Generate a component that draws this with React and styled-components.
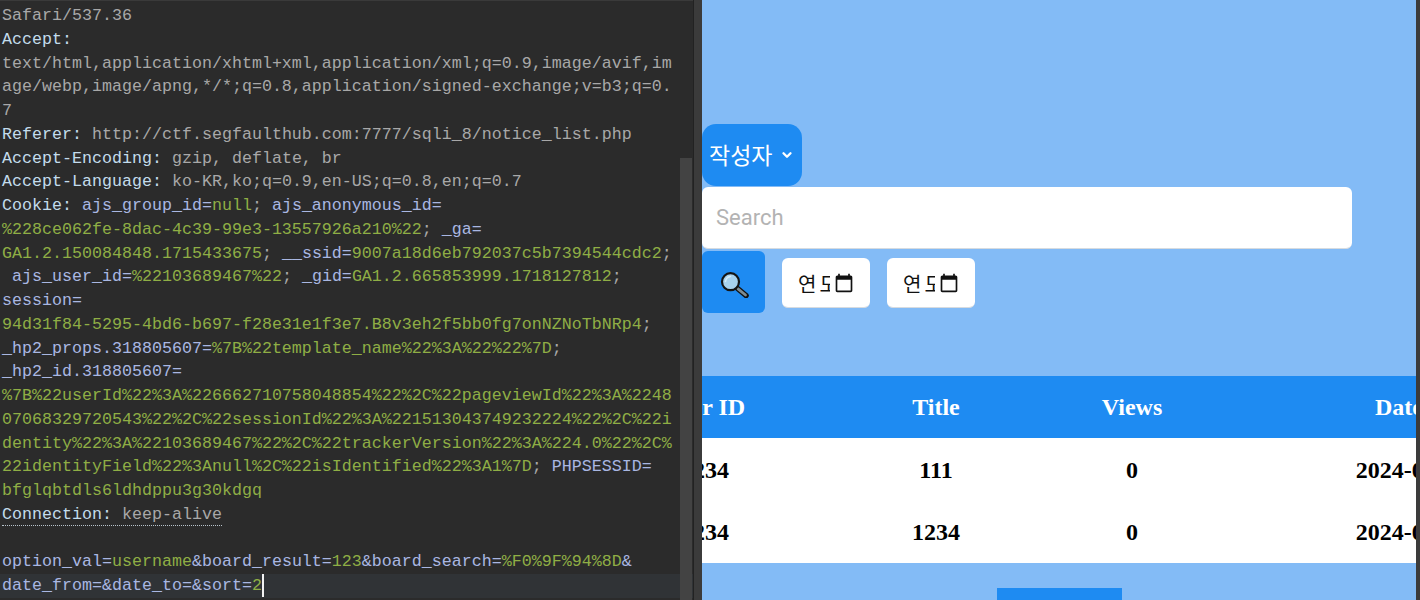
import React from "react";
import styled, { createGlobalStyle } from "styled-components";
import { ChevronDown } from "lucide-react";

const GlobalStyle = createGlobalStyle`
html, body {
  margin: 0;
  padding: 0;
  height: 100%;
  overflow: hidden;
  background: #2b2b2b;
}
`;

const tokenColors = {
  header: "#c3dcec",
  text: "#a8a8a8",
  name: "#a9b7e2",
  value: "#8fae45",
};

// h = header name, t = plain value, n = param name, v = param value
const requestLines = [
  [["t", "Safari/537.36"]],
  [["h", "Accept:"]],
  [["t", "text/html,application/xhtml+xml,application/xml;q=0.9,image/avif,im"]],
  [["t", "age/webp,image/apng,*/*;q=0.8,application/signed-exchange;v=b3;q=0."]],
  [["t", "7"]],
  [["h", "Referer:"], ["t", " http://ctf.segfaulthub.com:7777/sqli_8/notice_list.php"]],
  [["h", "Accept-Encoding:"], ["t", " gzip, deflate, br"]],
  [["h", "Accept-Language:"], ["t", " ko-KR,ko;q=0.9,en-US;q=0.8,en;q=0.7"]],
  [["h", "Cookie:"], ["n", " ajs_group_id="], ["v", "null"], ["t", "; "], ["n", "ajs_anonymous_id="]],
  [["v", "%228ce062fe-8dac-4c39-99e3-13557926a210%22"], ["t", "; "], ["n", "_ga="]],
  [["v", "GA1.2.150084848.1715433675"], ["t", "; "], ["n", "__ssid="], ["v", "9007a18d6eb792037c5b7394544cdc2"], ["t", ";"]],
  [["n", " ajs_user_id="], ["v", "%22103689467%22"], ["t", "; "], ["n", "_gid="], ["v", "GA1.2.665853999.1718127812"], ["t", ";"]],
  [["n", "session="]],
  [["v", "94d31f84-5295-4bd6-b697-f28e31e1f3e7.B8v3eh2f5bb0fg7onNZNoTbNRp4"], ["t", ";"]],
  [["n", "_hp2_props.318805607="], ["v", "%7B%22template_name%22%3A%22%22%7D"], ["t", ";"]],
  [["n", "_hp2_id.318805607="]],
  [["v", "%7B%22userId%22%3A%226662710758048854%22%2C%22pageviewId%22%3A%2248"]],
  [["v", "07068329720543%22%2C%22sessionId%22%3A%221513043749232224%22%2C%22i"]],
  [["v", "dentity%22%3A%22103689467%22%2C%22trackerVersion%22%3A%224.0%22%2C%"]],
  [["v", "22identityField%22%3Anull%2C%22isIdentified%22%3A1%7D"], ["t", "; "], ["n", "PHPSESSID="]],
  [["v", "bfglqbtdls6ldhdppu3g30kdgq"]],
];

const kinds = { h: "header", t: "text", n: "name", v: "value" };

const rows = [
  { id: "1234", title: "111", views: "0", date: "2024-06-11" },
  { id: "1234", title: "1234", views: "0", date: "2024-06-11" },
];

const Page = styled.div`
  display: flex;
  width: 1420px;
  height: 600px;
  overflow: hidden;
`;

const Editor = styled.div`
  position: relative;
  flex: 0 0 693px;
  box-sizing: border-box;
  padding-top: 3px;
  background: #2b2b2b;
  border-top: 1px solid #3a3a3a;
  font-family: "Liberation Mono", monospace;
  font-size: 16.67px;
  line-height: 23.75px;
  overflow: hidden;
`;

const Line = styled.div`
  height: 23.75px;
  padding-left: 2px;
  white-space: pre;
  color: ${tokenColors.text};
  background: ${(p) => (p.$current ? "#303336" : "transparent")};
`;

const Token = styled.span`
  color: ${(p) => tokenColors[p.$kind]};
`;

const Dotted = styled.span`
  border-bottom: 1px dotted #b8c4cc;
  padding-bottom: 1px;
`;

const Caret = styled.span`
  display: inline-block;
  width: 2px;
  height: 23px;
  vertical-align: top;
  background: #f2f2f2;
`;

const ScrollThumb = styled.div`
  position: absolute;
  top: 157px;
  right: 1px;
  bottom: 0;
  width: 12px;
  background: #434343;
`;

const Divider = styled.div`
  flex: 0 0 9px;
  box-sizing: border-box;
  background: #3b3b3b;
  border-left: 1px solid #222222;
`;

const Browser = styled.div`
  flex: 0 0 714px;
  box-sizing: border-box;
  padding-top: 124px;
  background: #83bbf6;
  overflow: hidden;
  font-family: "Noto Sans CJK KR", sans-serif;
`;

const Dropdown = styled.div`
  display: flex;
  align-items: center;
  gap: 8px;
  box-sizing: border-box;
  width: 100px;
  height: 62px;
  padding: 0 0 3px 7px;
  border-radius: 14px;
  background: #1e8bf2;
  color: #ffffff;
  font-size: 23px;
  svg {
    margin-top: 3px;
  }
`;

const SearchInput = styled.div`
  display: flex;
  align-items: center;
  box-sizing: border-box;
  width: 650px;
  height: 62px;
  margin-top: 1px;
  padding-left: 14px;
  border-radius: 6px;
  border-bottom: 1px solid #d6dbe0;
  background: #ffffff;
  color: #b3b3b3;
  font-family: Roboto, sans-serif;
  font-size: 22px;
`;

const Filters = styled.div`
  display: flex;
  align-items: center;
  gap: 17px;
  margin-top: 2px;
`;

const SearchButton = styled.div`
  display: flex;
  align-items: center;
  justify-content: center;
  width: 63px;
  height: 62px;
  border-radius: 6px;
  background: #1e8bf2;
`;

const DateField = styled.div`
  display: flex;
  align-items: center;
  box-sizing: border-box;
  width: 88px;
  height: 50px;
  margin-top: 2px;
  padding-left: 16px;
  border-radius: 6px;
  border-bottom: 1px solid #d6dbe0;
  background: #ffffff;
  color: #111111;
  font-size: 20px;
`;

const DateText = styled.span`
  display: block;
  width: 32px;
  padding-top: 1px;
  overflow: hidden;
  white-space: nowrap;
  letter-spacing: 3px;
`;

const CalendarIcon = styled.svg`
  width: 20px;
  height: 20px;
  margin: 1px 0 0 4px;
  fill: #111111;
`;

const Table = styled.div`
  width: 1002px;
  margin: 63px 0 0 -130px;
  font-family: "Liberation Serif", serif;
  font-size: 24px;
  font-weight: 700;
  text-align: center;
`;

const Row = styled.div`
  display: grid;
  grid-template-columns: 266px 196px 196px 344px;
  align-items: center;
  box-sizing: border-box;
  height: ${(p) => (p.$head ? "62px" : "62.5px")};
  padding-top: ${(p) => (p.$head ? "0" : "2px")};
  background: ${(p) => (p.$head ? "#1e8bf2" : "#ffffff")};
  color: ${(p) => (p.$head ? "#ffffff" : "#000000")};
`;

const HeadDate = styled.div`
  padding-right: 6px;
`;

const DateCell = styled.div`
  padding-left: 24px;
  margin-right: 6px;
`;

const Pager = styled.div`
  display: flex;
  justify-content: center;
  margin-top: 25px;
`;

const PagerButton = styled.div`
  width: 125px;
  height: 40px;
  background: #1e8bf2;
`;

const RightEdge = styled.div`
  flex: 0 0 4px;
  background: #3b3b3b;
`;

const MagnifierIcon = () => (
  <svg width="32" height="32" viewBox="0 0 32 32" aria-hidden="true">
    <path d="M19 22l9 7.500" stroke="#111" strokeWidth="5.500" strokeLinecap="round" />
    <path d="M20 22.800l7.500 6.200" stroke="#7e8c93" strokeWidth="2.800" strokeLinecap="round" />
    <circle cx="12.500" cy="15.700" r="8.500" fill="#a7d2ee" stroke="#141414" strokeWidth="2.200" />
    <path d="M7.500 15.500c.4-2.800 2.300-4.700 5-5" fill="none" stroke="#d4ecfa" strokeWidth="1.500" strokeLinecap="round" />
  </svg>
);

const DateInput = () => (
  <DateField>
    <DateText>연도</DateText>
    <CalendarIcon viewBox="0 0 24 24" aria-hidden="true">
      <path d="M20 3h-1V1h-2v2H7V1H5v2H4c-1.100 0-2 .9-2 2v16c0 1.100.9 2 2 2h16c1.100 0 2-.9 2-2V5c0-1.100-.9-2-2-2zm0 18H4V8h16v13z" />
    </CalendarIcon>
  </DateField>
);

export default function App() {
  return (
    <>
      <GlobalStyle />
      <Page>
        <Editor>
          {requestLines.map((segments, i) => (
            <Line key={i}>
              {segments.map(([kind, text], j) => (
                <Token key={j} $kind={kinds[kind]}>{text}</Token>
              ))}
            </Line>
          ))}
          <Line>
            <Dotted>
              <Token $kind="header">Connection:</Token>
              <Token $kind="text"> keep-alive</Token>
            </Dotted>
          </Line>
          <Line />
          <Line>
            <Token $kind="name">option_val=</Token>
            <Token $kind="value">username</Token>
            <Token $kind="name">&amp;board_result=</Token>
            <Token $kind="value">123</Token>
            <Token $kind="name">&amp;board_search=</Token>
            <Token $kind="value">%F0%9F%94%8D</Token>
            <Token $kind="name">&amp;</Token>
          </Line>
          <Line $current>
            <Token $kind="name">date_from=&amp;date_to=&amp;sort=</Token>
            <Token $kind="value">2</Token>
            <Caret />
          </Line>
          <ScrollThumb />
        </Editor>
        <Divider />
        <Browser>
          <Dropdown>
            작성자
            <ChevronDown size={14} strokeWidth={4} />
          </Dropdown>
          <SearchInput>Search</SearchInput>
          <Filters>
            <SearchButton>
              <MagnifierIcon />
            </SearchButton>
            <DateInput />
            <DateInput />
          </Filters>
          <Table>
            <Row $head>
              <div>User ID</div>
              <div>Title</div>
              <div>Views</div>
              <HeadDate>Date</HeadDate>
            </Row>
            {rows.map((r) => (
              <Row key={r.title}>
                <div>{r.id}</div>
                <div>{r.title}</div>
                <div>{r.views}</div>
                <DateCell>{r.date}</DateCell>
              </Row>
            ))}
          </Table>
          <Pager>
            <PagerButton />
          </Pager>
        </Browser>
        <RightEdge />
      </Page>
    </>
  );
}
